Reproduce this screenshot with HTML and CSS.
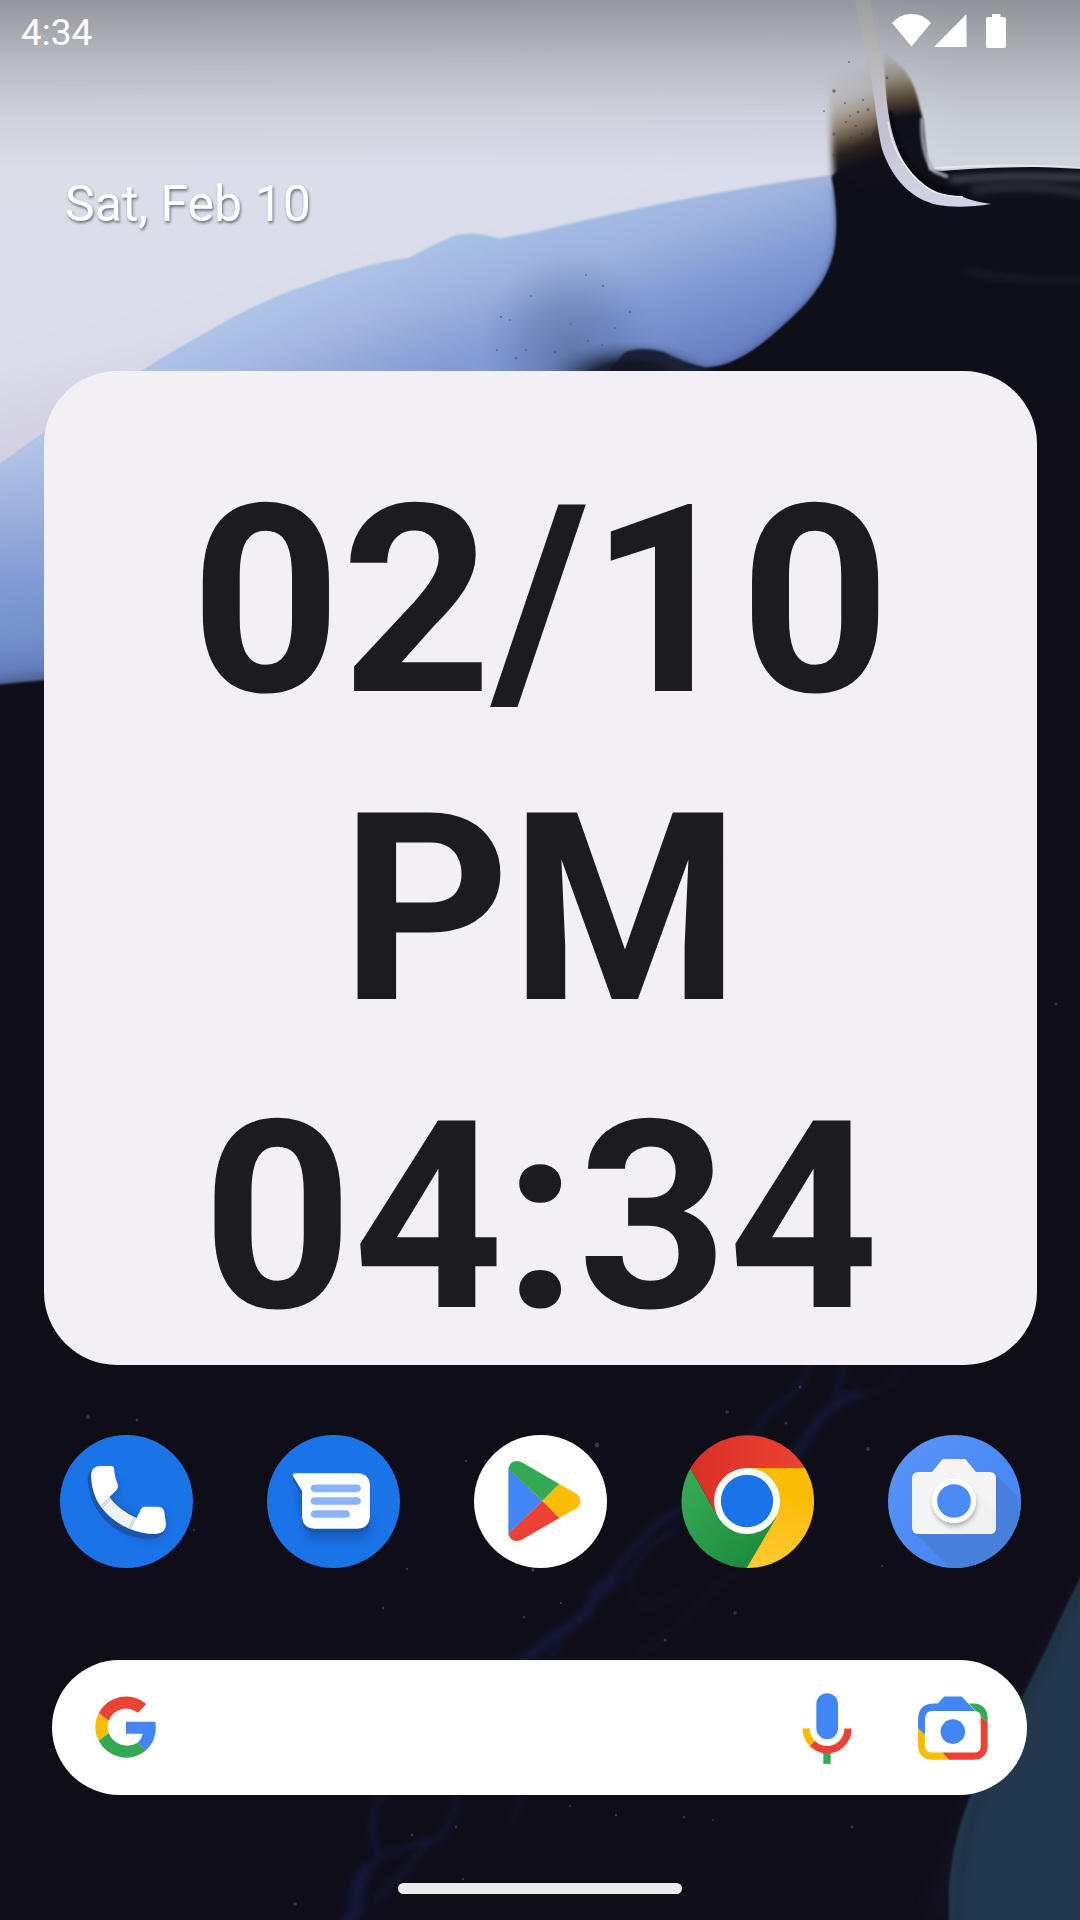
FILE: index.html
```html
<!DOCTYPE html>
<html lang="en">
<head>
<meta charset="utf-8">
<title>Home screen</title>
<link rel="stylesheet" href="styles.css">
</head>
<body>
<div class="screen">
  <svg class="wallpaper" viewBox="0 0 1080 1920" color-interpolation-filters="sRGB" aria-hidden="true">
    <defs>
      <linearGradient id="paper" gradientUnits="userSpaceOnUse" x1="100" y1="0" x2="200" y2="420">
        <stop offset="0" stop-color="#dbdde6"/><stop offset=".5" stop-color="#dbdeea"/><stop offset=".78" stop-color="#dadcea"/><stop offset=".9" stop-color="#d5d4e5"/><stop offset="1" stop-color="#d2cfe2"/>
      </linearGradient>
      <linearGradient id="panel" gradientUnits="userSpaceOnUse" x1="860" y1="0" x2="960" y2="0">
        <stop offset="0" stop-color="#d2d7dd" stop-opacity="0"/><stop offset="1" stop-color="#d2d7dd"/>
      </linearGradient>
      <linearGradient id="blue" gradientUnits="userSpaceOnUse" x1="560" y1="205" x2="620" y2="385">
        <stop offset="0" stop-color="#a5c1e7"/><stop offset=".3" stop-color="#9fb4df"/><stop offset=".65" stop-color="#8099d4"/><stop offset="1" stop-color="#6a82c4"/>
      </linearGradient>
      <linearGradient id="blueLeft" gradientUnits="userSpaceOnUse" x1="0" y1="440" x2="25" y2="684">
        <stop offset="0" stop-color="#b1c8e8"/><stop offset=".22" stop-color="#a5b6de"/><stop offset=".6" stop-color="#809ad5"/><stop offset=".82" stop-color="#7290cb"/><stop offset=".94" stop-color="#657dbd"/><stop offset="1" stop-color="#4c5b8c"/>
      </linearGradient>
      <linearGradient id="blueMid" gradientUnits="userSpaceOnUse" x1="300" y1="285" x2="350" y2="400">
        <stop offset="0" stop-color="#adc5e8"/><stop offset=".4" stop-color="#a7b9e0"/><stop offset="1" stop-color="#879dd6"/>
      </linearGradient>
      <linearGradient id="midFade" gradientUnits="userSpaceOnUse" x1="350" y1="0" x2="600" y2="0">
        <stop offset="0" stop-color="#fff"/><stop offset="1" stop-color="#000"/>
      </linearGradient>
      <mask id="midMask"><rect width="1080" height="500" fill="url(#midFade)"/></mask>
      <linearGradient id="burn" gradientUnits="userSpaceOnUse" x1="850" y1="66" x2="886" y2="168">
        <stop offset="0" stop-color="#b5b0a4" stop-opacity="0"/><stop offset=".25" stop-color="#b5ae9f" stop-opacity=".4"/><stop offset=".5" stop-color="#84715a" stop-opacity=".8"/><stop offset=".72" stop-color="#2e251e"/><stop offset=".88" stop-color="#11101a"/>
      </linearGradient>
      <linearGradient id="burnTip" gradientUnits="userSpaceOnUse" x1="890" y1="55" x2="898" y2="118">
        <stop offset="0" stop-color="#b9b7b3" stop-opacity=".2"/><stop offset=".4" stop-color="#9f9686"/><stop offset=".7" stop-color="#5c4d3a"/><stop offset="1" stop-color="#11111a"/>
      </linearGradient>
      <linearGradient id="wire" gradientUnits="userSpaceOnUse" x1="0" y1="0" x2="0" y2="205">
        <stop offset="0" stop-color="#e8e7e7"/><stop offset=".35" stop-color="#dad9dc"/><stop offset=".65" stop-color="#c8c8da"/><stop offset="1" stop-color="#d2d2e6"/>
      </linearGradient>
      <linearGradient id="scrim" x1="0" y1="0" x2="0" y2="1">
        <stop offset="0" stop-color="#000" stop-opacity=".32"/><stop offset=".33" stop-color="#000" stop-opacity=".17"/><stop offset=".65" stop-color="#000" stop-opacity=".06"/><stop offset="1" stop-color="#000" stop-opacity="0"/>
      </linearGradient>
      <radialGradient id="smudge"><stop offset="0" stop-color="#0f101a"/><stop offset=".45" stop-color="#151a28" stop-opacity=".9"/><stop offset=".75" stop-color="#2b3a5c" stop-opacity=".4"/><stop offset="1" stop-color="#3f5380" stop-opacity="0"/></radialGradient>
      <radialGradient id="haze"><stop offset="0" stop-color="#3f537c" stop-opacity=".42"/><stop offset=".5" stop-color="#4a6090" stop-opacity=".28"/><stop offset="1" stop-color="#5b74ab" stop-opacity="0"/></radialGradient>
      <filter id="soft1" filterUnits="userSpaceOnUse" x="-20" y="-20" width="1120" height="1960"><feGaussianBlur stdDeviation="1"/></filter>
      <filter id="soft3" filterUnits="userSpaceOnUse" x="-20" y="-20" width="1120" height="1960"><feGaussianBlur stdDeviation="3"/></filter>
      <filter id="soft8" filterUnits="userSpaceOnUse" x="-20" y="-20" width="1120" height="1960"><feGaussianBlur stdDeviation="8"/></filter>
      <path id="wave" d="M-5 469L44 434Q90 402 143 371Q175 350 207 333Q260 301 310 285Q361 265 410 258Q431 246 455 236Q474 231 499 239L540 231Q685 195 831 175Q838 212 835 240C833 266 820 288 802 307C770 338 740 366 705 367Q684 363 664 352Q640 346 625 352L590 390L44 480L-5 500Z"/>
      <clipPath id="waveClip"><use href="#wave"/></clipPath>
    </defs>
    <rect width="1080" height="1920" fill="#0f0e18"/>
    <path d="M0 0H1080V166Q1000 164 929 172L832 178L600 300L400 400L0 500Z" fill="url(#paper)"/>
    <path d="M860 0H1080V168Q1000 165 929 172H860Z" fill="url(#panel)"/>
    <path d="M826 180L868 150L884 100L915 100L929 170L960 174Q1020 167 1090 170V400H560L640 340L826 290Z" fill="#0f0f19" filter="url(#soft1)"/>
    <path d="M828 60Q855 75 893 60V186L834 184Q830 120 828 60Z" fill="url(#burn)" filter="url(#soft3)"/>
    <path d="M884 54Q908 65 917 96L923 120L928 172L890 176Z" fill="url(#burnTip)" filter="url(#soft1)"/>
    <use href="#wave" fill="url(#blue)" filter="url(#soft1)"/>
    <g mask="url(#midMask)"><use href="#wave" fill="url(#blueMid)" filter="url(#soft1)"/></g>
    <path d="M-4 467L44 434L100 400V675Q30 681 -4 685Z" fill="url(#blueLeft)" filter="url(#soft1)"/>
    <g clip-path="url(#waveClip)">
      <path d="M836 188Q841 215 838 242C835 268 822 290 802 309C770 338 740 366 705 368" fill="none" stroke="#4f66a6" stroke-width="9" opacity=".7" filter="url(#soft3)"/>
      <ellipse cx="570" cy="350" rx="90" ry="100" fill="url(#haze)"/>
    </g>
    <ellipse cx="630" cy="379" rx="88" ry="38" fill="url(#smudge)"/>
    <g fill="#3b4662" opacity=".45">
      <circle cx="501" cy="317" r="1.3"/><circle cx="510" cy="320" r="1"/><circle cx="497" cy="350" r="1.2"/><circle cx="516" cy="358" r="1.6"/><circle cx="526" cy="350" r="1.1"/><circle cx="531" cy="296" r="1"/><circle cx="586" cy="275" r="1.1"/><circle cx="603" cy="286" r="1.3"/><circle cx="630" cy="312" r="1.4"/><circle cx="615" cy="328" r="1"/><circle cx="555" cy="352" r="1.5"/><circle cx="588" cy="341" r="1.3"/><circle cx="602" cy="345" r="1.1"/><circle cx="571" cy="324" r="1"/>
    </g>
    <g fill="#4c4032" opacity=".6">
      <circle cx="834" cy="91" r="1.8"/><circle cx="849" cy="62" r="1"/><circle cx="824" cy="111" r="1"/><circle cx="834" cy="134" r="1.5"/><circle cx="834" cy="155" r="1.5"/><circle cx="846" cy="122" r="1.2"/><circle cx="858" cy="112" r="1.3"/><circle cx="863" cy="100" r="1.1"/><circle cx="851" cy="138" r="1.5"/><circle cx="842" cy="146" r="1.2"/><circle cx="856" cy="126" r="1.3"/><circle cx="887" cy="78" r="1.4"/><circle cx="868" cy="110" r="1.4"/><circle cx="845" cy="103" r="1"/><circle cx="850" cy="116" r="1"/><circle cx="862" cy="134" r="1.6"/>
    </g>
    <path d="M934 168Q1010 163 1080 168" fill="none" stroke="#eef1f5" stroke-width="2" opacity=".8"/>
    <path d="M922 118Q921 155 934 171L948 177" fill="none" stroke="#a9aebc" stroke-width="4" filter="url(#soft1)" opacity=".85"/>
    <path d="M950 180Q1010 174 1090 178" fill="none" stroke="#494c59" stroke-width="6" filter="url(#soft3)"/>
    <path d="M972 190Q1030 182 1090 194" fill="none" stroke="#292a35" stroke-width="10" filter="url(#soft3)"/>
    <path d="M965 270Q1010 282 1090 280" fill="none" stroke="#20212c" stroke-width="4" filter="url(#soft3)"/>
    <path d="M890 112C895 160 925 191 960 193" fill="none" stroke="#090a10" stroke-width="6" filter="url(#soft1)"/>
    <path d="M855 0H870L884 75C888 113 890 145 912 174C930 194 943 196 963 197Q975 202 991 204Q960 209 938 205C911 199 892 179 882 149C877 126 876 110 871 76Z" fill="url(#wire)"/>
    <path d="M888 122C892 146 898 157 912 174C930 194 943 196 963 197" fill="none" stroke="#f3f3fa" stroke-width="1.5"/>
    <rect width="1080" height="172" fill="url(#scrim)"/>

    <g fill="none" stroke="#171d4a" stroke-linecap="round" stroke-linejoin="round" filter="url(#soft3)" opacity=".62">
      <path d="M858 1394Q836 1402 823 1415Q812 1430 796 1456" stroke-width="10"/>
      <path d="M844 1365L837 1398M812 1365Q800 1390 782 1402Q764 1416 752 1436" stroke-width="5"/>
      <path d="M905 1368L880 1390L850 1400" stroke-width="2"/>
      <path d="M690 1506Q655 1520 641 1542Q620 1560 610 1580L593 1592" stroke-width="7"/>
      <path d="M610 1580Q592 1592 588 1612Q566 1630 548 1640L520 1664" stroke-width="11"/>
      <path d="M678 1528Q648 1543 632 1571Q612 1585 590 1608Q566 1626 548 1664" stroke-width="4"/>
      <path d="M632 1571Q630 1600 642 1605Q660 1608 680 1590M745 1568Q710 1588 684 1620L637 1657" stroke-width="2"/>
      <path d="M382 1794Q369 1815 374 1840L379 1856L360 1880" stroke-width="6"/>
      <path d="M364 1872Q352 1895 358 1908L345 1925" stroke-width="15"/>
      <path d="M458 1796Q454 1820 440 1838Q425 1840 412 1846L382 1856M430 1843Q412 1860 405 1872L376 1900" stroke-width="5"/>
      <path d="M523 1794L513 1820" stroke-width="3"/>
    </g>
    <g fill="#858791" opacity=".35">
      <circle cx="88" cy="1417" r="2"/><circle cx="137" cy="1420" r="1.5"/><circle cx="727" cy="1412" r="1.8"/><circle cx="597" cy="1445" r="2.4"/><circle cx="800" cy="1387" r="1.5"/><circle cx="786" cy="1423" r="1.5"/><circle cx="868" cy="1449" r="2"/><circle cx="533" cy="1570" r="1.7"/><circle cx="466" cy="1461" r="1.3"/><circle cx="407" cy="1569" r="1.3"/><circle cx="383" cy="1608" r="1.2"/><circle cx="735" cy="1613" r="1.7"/><circle cx="665" cy="1640" r="1.5"/><circle cx="561" cy="1603" r="1.2"/><circle cx="524" cy="1617" r="1.2"/><circle cx="456" cy="1827" r="1.4"/><circle cx="570" cy="1806" r="1.2"/><circle cx="616" cy="1815" r="1.2"/><circle cx="684" cy="1817" r="1.2"/><circle cx="713" cy="1820" r="1.1"/><circle cx="852" cy="1827" r="1.5"/><circle cx="295" cy="1904" r="1.8"/><circle cx="412" cy="1835" r="1.4"/><circle cx="1056" cy="1004" r="1.5"/><circle cx="882" cy="1566" r="1.2"/><circle cx="194" cy="1530" r="1.1"/><circle cx="463" cy="1879" r="1.3"/>
    </g>
    <path d="M1080 1590Q1035 1655 1012 1720Q970 1790 950 1850Q930 1890 932 1920H1080Z" fill="#15152a" filter="url(#soft8)" opacity=".6"/>
    <path d="M1090 1560L1080 1578Q1063 1612 1048 1646L1022 1699Q987 1760 970 1796Q951 1845 949 1889V1940H1090Z" fill="#22384e" filter="url(#soft1)"/>
    <path d="M1087 1580Q1064 1618 1050 1656Q1002 1745 979 1800Q959 1850 957 1930" fill="none" stroke="#1d3241" stroke-width="8" filter="url(#soft3)" opacity=".8"/>
  </svg>

  <header class="status-bar">
    <span class="status-time">4:34</span>
    <div class="status-icons">
      <svg class="wifi" viewBox="0 0 39 33"><path d="M0 9Q8 0 19.500 0T39 9L19.500 32.500Z"/></svg>
      <svg class="signal" viewBox="0 0 33 33"><path d="M0 33H32.500V0Z"/></svg>
      <svg class="battery" viewBox="0 0 20 34"><path d="M6 0H14.500V3H18Q20 3 20 5V32Q20 34 18 34H2Q0 34 0 32V5Q0 3 2 3H6Z"/></svg>
    </div>
  </header>

  <div class="date">Sat, Feb 10</div>

  <main class="clock-widget">
    <div>02/10</div>
    <div>PM</div>
    <div>04:34</div>
  </main>

  <nav class="dock">
    <svg class="app" viewBox="60 75 399 399" role="img" aria-label="Phone">
      <defs>
        <filter id="phoneShade" x="-30%" y="-30%" width="160%" height="160%"><feGaussianBlur stdDeviation="13"/></filter>
      </defs>
      <circle cx="259.500" cy="274.500" r="199.500" fill="#1b73e8"/>
      <path d="M165 190L240 225L225 270L290 322L385 310Q385 385 335 395Q200 370 165 190Z" fill="#174ea6" opacity=".5" filter="url(#phoneShade)"/>
      <path d="M155 180Q143 190 143 210C147 305 225 385 323 386Q372 388 378 352L350 340L180 280Z" fill="#1a55ae"/>
      <path d="M208 262Q240 303 291 325L268 356Q213 334 182 289Z" fill="#f1f2f4"/>
      <path d="M208 262L213 269L188 296L181 288ZM291 325L282 321L264 354L272 358Z" fill="#dadce0"/>
      <path d="M181 168H213Q221 168 222 175Q224 203 233 222Q236 233 229 241L181 288Q156 252 153 200Q152 169 181 168ZM312 290H354Q371 291 373 306L378 343Q378 370 348 372Q309 373 272 358L300 304Q304 291 312 290Z" fill="#fff"/>
    </svg>
    <svg class="app" viewBox="681 75 399 399" role="img" aria-label="Messages">
      <circle cx="880.500" cy="274.500" r="199.500" fill="#1b73e8"/>
      <path d="M765 220L950 210L995 340Q990 390 950 390H820Q790 385 790 340Z" fill="#174ea6" opacity=".55" filter="url(#phoneShade)"/>
      <path d="M759 199V209L786 258V330Q787 367 825 367H952Q989 367 989 330V300Z" fill="#1a55ae"/>
      <path d="M764 190H952Q989 191 990 228V318Q988 355 952 356H824Q787 355 786 318V243L760 200Q756 190 764 190Z" fill="#fff"/>
      <path d="M824 235H951M824 273H951M824 312H918" stroke="#8ab4f8" stroke-width="23" stroke-linecap="round"/>
    </svg>
    <svg class="app" viewBox="72 75 399 399" role="img" aria-label="Play Store">
      <circle cx="271.500" cy="274.500" r="199.500" fill="#fff"/>
      <path d="M175 175V372L277 273Z" fill="#4285f4"/>
      <path d="M175 176Q180 153 201 153Q209 153 218 158L328 222L277 273Z" fill="#34a853"/>
      <path d="M328 222L376 249Q391 258 391 273T376 297L328 324L277 273Z" fill="#fbbc04"/>
      <path d="M175 371Q180 393 201 393Q209 393 218 388L328 324L277 273Z" fill="#ea4335"/>
    </svg>
    <svg class="app" viewBox="693 75 399 399" role="img" aria-label="Chrome">
      <defs>
        <linearGradient id="cr" x1="0" y1="0" x2="1" y2="0"><stop offset="0" stop-color="#d93025"/><stop offset="1" stop-color="#ea4335"/></linearGradient>
        <linearGradient id="cy" x1=".5" y1="0" x2=".3" y2="1"><stop offset=".2" stop-color="#fbbc04"/><stop offset="1" stop-color="#fcc934"/></linearGradient>
        <linearGradient id="cg" x1="0" y1=".3" x2=".6" y2="1"><stop offset="0" stop-color="#34a853"/><stop offset="1" stop-color="#1e8e3e"/></linearGradient>
      </defs>
      <path d="M721 175A199.500 199.500 0 0 0 890 474L978 323L892 274L806 323Z" fill="url(#cg)"/>
      <path d="M1065 174A199.500 199.500 0 0 1 890 474L978 323L892 274V174Z" fill="url(#cy)"/>
      <path d="M721 175A199.500 199.500 0 0 1 1065 174H892V274L806 323Z" fill="url(#cr)"/>
      <circle cx="891" cy="273" r="99" fill="#fff"/>
      <circle cx="891" cy="273" r="78.500" fill="#1a73e8"/>
    </svg>
    <svg class="app" viewBox="324 75 399 399" role="img" aria-label="Camera">
      <defs>
        <linearGradient id="cam" x1="0" y1="0" x2="1" y2="1"><stop offset="0" stop-color="#5b96f7"/><stop offset=".5" stop-color="#4c8bf5"/><stop offset="1" stop-color="#4285f4"/></linearGradient>
        <clipPath id="camClip"><circle cx="523.500" cy="274.500" r="199.500"/></clipPath>
        <filter id="lensShade" x="-30%" y="-30%" width="160%" height="160%"><feGaussianBlur stdDeviation="7"/></filter>
      </defs>
      <circle cx="523.500" cy="274.500" r="199.500" fill="url(#cam)"/>
      <path d="M402 366L520 484H750V296L643 190Z" fill="#4780da" clip-path="url(#camClip)"/>
      <path d="M456 186L488 147H556L588 186H630Q648 187 648 204V354Q647 371 630 372H414Q397 371 396 354V204Q397 187 414 186Z" fill="#f5f5f5"/>
      <path d="M568 226L648 306V354Q647 371 630 372H523L475 324Z" fill="#f1f1f1"/>
      <circle cx="524" cy="283" r="66" fill="#777" opacity=".5" filter="url(#lensShade)"/>
      <circle cx="522" cy="273" r="66.500" fill="#fff"/>
      <circle cx="522" cy="273" r="50.500" fill="#4c8bf5"/>
    </svg>
  </nav>

  <div class="search-bar">
    <svg class="google" viewBox="165 138 183 186" role="img" aria-label="Google">
      <path d="M176 189A93 93 0 0 1 319 162L294 188A56 56 0 0 0 206 213Z" fill="#ea4335"/>
      <path d="M176 189A93 93 0 0 0 176 272L206 249A56 56 0 0 1 206 213Z" fill="#fbbc04"/>
      <path d="M176 272A93 93 0 0 0 319 301L291 279A59 59 0 0 1 206 249Z" fill="#34a853"/>
      <path d="M258 215H346Q354 266 319 301L291 279Q305 268 308 251H258Z" fill="#4285f4"/>
    </svg>
    <svg class="mic" viewBox="126 128 150 212" role="img" aria-label="Voice search">
      <rect x="169" y="128" width="65" height="138" rx="32.500" fill="#4285f4"/>
      <path d="M190 300H212V340H190Z" fill="#34a853"/>
      <path d="M138.500 234A62.500 62.500 0 0 0 157 279" fill="none" stroke="#fbbc04" stroke-width="22"/>
      <path d="M157 279A62.500 62.500 0 0 0 264 234" fill="none" stroke="#ea4335" stroke-width="22"/>
    </svg>
    <svg class="lens" viewBox="474 136 211 192" role="img" aria-label="Lens">
      <path d="M474 233V204Q476 160 518 158H533L553 137H606L646 181H517Q496 182 495 204V254Z" fill="#4285f4"/>
      <path d="M627 158H642Q681 160 684 200V217L663 196Q661 185 653 183L647 180Z" fill="#34a853"/>
      <path d="M663 196L684 217V287Q682 326 642 328H567L547 306H647Q662 305 663 288Z" fill="#ea4335"/>
      <path d="M474 233L495 254V288Q496 305 515 306H547L567 328H518Q476 326 474 287Z" fill="#fbbc04"/>
      <circle cx="579" cy="243" r="37" fill="#4285f4"/>
    </svg>
  </div>
  <div class="gesture-bar"></div>
</div>
</body>
</html>
```
FILE: styles.css
```css
* {
  box-sizing: border-box;
}

body {
  margin: 0;
  font-family: Roboto, sans-serif;
}

.screen {
  position: relative;
  isolation: isolate;
  display: flex;
  flex-direction: column;
  width: 1080px;
  height: 1920px;
  overflow: hidden;
  background: #0f0e18;
}

.wallpaper {
  position: absolute;
  inset: 0;
  z-index: -1;
  width: 100%;
  height: 100%;
}

.status-bar {
  display: flex;
  justify-content: space-between;
  height: 63px;
  padding: 0 74px 0 21px;
  color: #fff;
}

.status-time {
  padding-top: 11px;
  font-size: 37px;
  line-height: 43px;
}

.status-icons {
  display: flex;
  padding-top: 14px;
  fill: #fff;
}

.wifi {
  width: 39px;
  height: 33px;
  margin-right: 3px;
}

.signal {
  width: 33px;
  height: 33px;
  margin-right: 19px;
}

.battery {
  width: 20px;
  height: 34px;
}

.date {
  height: 308px;
  padding: 112px 0 0 65px;
  color: #fff;
  font-size: 50px;
  line-height: 58px;
  text-shadow: 1px 2px 3px rgba(0, 0, 0, .5);
}

.clock-widget {
  height: 994px;
  margin: 0 43px 0 44px;
  padding-top: 76px;
  border-radius: 73px;
  background: #f2eff5;
  color: #1c1b1f;
  font-size: 262.5px;
  font-weight: 700;
  line-height: 308px;
  text-align: center;
}

.dock {
  display: flex;
  justify-content: space-between;
  margin: 70px 59px 0 60px;
}

.app {
  width: 133px;
  height: 133px;
}

.search-bar {
  display: flex;
  align-items: center;
  height: 135px;
  margin: 92px 53px 0 52px;
  padding: 0 39px 0 43px;
  border-radius: 68px;
  background: #fff;
}

.google {
  width: 61px;
  height: 62px;
  margin: 0 auto 1px 0;
}

.mic {
  width: 50px;
  height: 71px;
  margin: 1px 66px 0 0;
}

.lens {
  width: 70px;
  height: 64px;
}

.gesture-bar {
  width: 284px;
  height: 11px;
  margin: 88px auto 0;
  border-radius: 6px;
  background: #ececec;
}
```
